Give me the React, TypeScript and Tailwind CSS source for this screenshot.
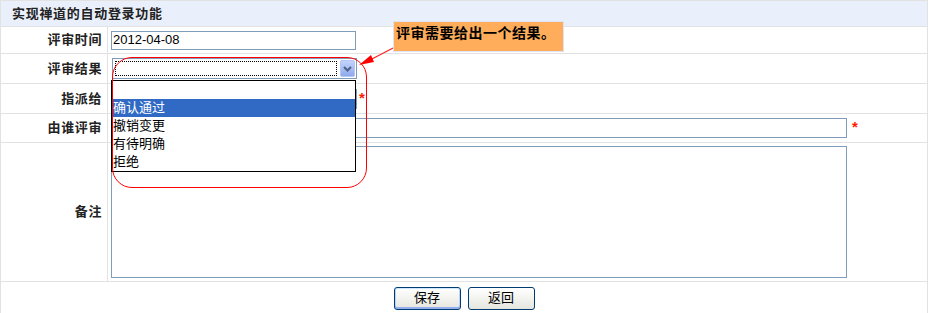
import React from "react";

const font = "font-['Liberation_Sans','Noto_Sans_CJK_SC',sans-serif]";

const Star = ({ className = "" }: { className?: string }) => (
  <span className={`absolute text-[15px] font-bold leading-none text-[#ff1a00] ${className}`}>*</span>
);

const Label = ({ children }: { children: React.ReactNode }) => (
  <td className="border border-[#e2e2e2] pr-[5px] text-right align-middle text-[13px] font-bold tracking-[0.6px] text-[#222]">
    {children}
  </td>
);

export default function App() {
  const options = ["", "确认通过", "撤销变更", "有待明确", "拒绝"];

  return (
    <div className={`relative h-[313px] w-[930px] overflow-hidden bg-white ${font}`}>
      <table className="w-[928px] table-fixed border-collapse">
        <colgroup>
          <col className="w-[107px]" />
          <col />
        </colgroup>
        <tbody>
          <tr className="h-[26px]">
            <td colSpan={2} className="border border-[#e2e2e2] bg-[#eaf0fb] pl-[11px] text-[13px] font-bold tracking-[0.7px] text-[#222]">
              实现禅道的自动登录功能
            </td>
          </tr>
          <tr className="h-[27px]">
            <Label>评审时间</Label>
            <td className="border border-[#e2e2e2] pl-[3px]">
              <div className="flex h-[19px] w-[245px] items-center border border-[#7f9db9] px-[1px] text-[13px] text-black">
                2012-04-08
              </div>
            </td>
          </tr>
          <tr className="h-[30px]">
            <Label>评审结果</Label>
            <td className="border border-[#e2e2e2] pl-[4px]">
              <div className="flex h-[21px] w-[245px] items-stretch border border-[#7f9db9] bg-white p-[1px]">
                <div className="m-[1px] flex-1 border border-dotted border-black" />
                <div className="ml-[2px] flex w-[15px] items-center justify-center rounded-[2px] border border-[#b4c6f5] bg-gradient-to-b from-[#c4d3fb] to-[#8ea9ec]">
                  <svg width="9" height="6" viewBox="0 0 9 6">
                    <path d="M1 1 L4.5 4.5 L8 1" stroke="#4d6185" strokeWidth="2" fill="none" />
                  </svg>
                </div>
              </div>
            </td>
          </tr>
          <tr className="h-[30px]">
            <Label>指派给</Label>
            <td className="border border-[#e2e2e2] pl-[4px]">
              <div className="h-[20px] w-[245px] border border-[#7f9db9]" />
            </td>
          </tr>
          <tr className="h-[29px]">
            <Label>由谁评审</Label>
            <td className="border border-[#e2e2e2] pl-[3px]">
              <div className="h-[20px] w-[736px] border border-[#7f9db9]" />
            </td>
          </tr>
          <tr className="h-[139px]">
            <Label>备注</Label>
            <td className="border border-[#e2e2e2] pl-[3px]">
              <div className="h-[132px] w-[736px] border border-[#7f9db9]" />
            </td>
          </tr>
          <tr className="h-[32px]">
            <td colSpan={2} className="border border-[#e2e2e2]">
              <div className="flex justify-center gap-[7px] pt-[1px]">
                <button className="flex h-[23px] w-[67px] items-center justify-center rounded-[3px] border border-[#003c74] bg-gradient-to-b from-white to-[#e6e6df] text-[13px] text-black shadow-[inset_0_-2px_0_#97aeed,inset_0_1px_0_#cee7ff,inset_1px_0_0_#bad3fb,inset_-1px_0_0_#bad3fb]">
                  保存
                </button>
                <button className="flex h-[23px] w-[67px] items-center justify-center rounded-[3px] border border-[#003c74] bg-gradient-to-b from-white to-[#e6e6df] text-[13px] text-black">
                  返回
                </button>
              </div>
            </td>
          </tr>
        </tbody>
      </table>

      <Star className="left-[359px] top-[90px]" />
      <Star className="left-[852px] top-[119px]" />

      {/* open dropdown list */}
      <div className="absolute left-[111px] top-[80px] w-[245px] border border-black bg-white">
        {options.map((o, i) => (
          <div
            key={i}
            className={`flex h-[18px] items-center pl-[1px] text-[13px] ${i === 1 ? "bg-[#316ac5] text-white" : "text-black"}`}
          >
            {o}
          </div>
        ))}
      </div>

      {/* annotation: red rounded frame */}
      <div className="pointer-events-none absolute left-[112px] top-[57px] h-[131px] w-[255px] rounded-[20px] border border-[#ff0000]" />

      {/* annotation: arrow */}
      <svg className="pointer-events-none absolute left-0 top-0" width="930" height="313">
        <line x1="397" y1="46" x2="368" y2="61" stroke="#ff2020" strokeWidth="1.2" />
        <polygon points="359,65 371,55 374,62" fill="#ff0000" />
      </svg>

      {/* annotation: callout */}
      <div className="absolute left-[393px] top-[21px] h-[31px] w-[171px] border border-[#dde3f5] bg-[#ffad5b] pl-[2px] pt-[2px] text-[14px] font-bold leading-[18px] tracking-[0.5px] text-black">
        评审需要给出一个结果。
      </div>
    </div>
  );
}
